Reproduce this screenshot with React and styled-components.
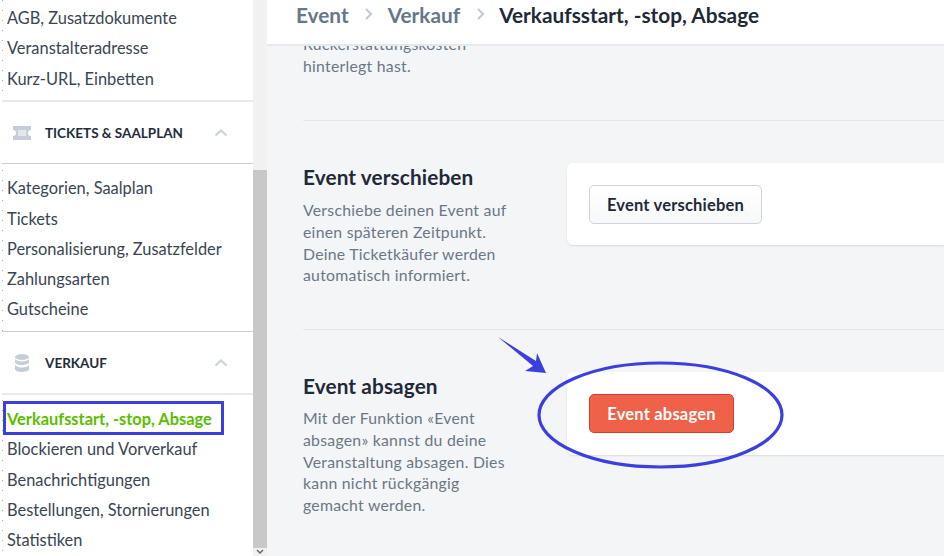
import React from "react";
import styled, { createGlobalStyle } from "styled-components";

const GlobalStyle = createGlobalStyle`
  html, body {
    margin: 0;
    padding: 0;
    height: 100%;
    overflow: hidden;
    background: #f4f5f7;
    font-family: "Lato", "Liberation Sans", sans-serif;
  }
  #root { height: 100%; }
`;

const Page = styled.div`
  position: relative;
  display: flex;
  width: 944px;
  height: 556px;
  overflow: hidden;
  background: #f4f5f7;
`;

const Sidebar = styled.nav`
  width: 253px;
  height: 556px;
  flex: none;
  padding: 3px 0 0 2px;
  box-sizing: border-box;
  overflow: hidden;
  background-color: #fff;
  background-image: repeating-linear-gradient(#a9afb6 0 1px, transparent 1px 10px);
  background-size: 1px 100%;
  background-position: 2px 0;
  background-repeat: no-repeat;
`;

const NavList = styled.div`
  display: flex;
  flex-direction: column;
  padding: ${(p) => p.$top || 0}px 0 6.5px 5px;
`;

const NavItem = styled.a`
  height: 30.25px;
  line-height: 30px;
  font-size: 16.4px;
  color: ${(p) => (p.$active ? "#5bbd00" : "#3a4553")};
  font-weight: ${(p) => (p.$active ? 700 : 400)};
  white-space: nowrap;
`;

const Section = styled.div`
  display: flex;
  align-items: center;
  height: ${(p) => p.$height}px;
  box-sizing: border-box;
  background: #fff;
  border-top: ${(p) => p.$topLine};
  border-bottom: ${(p) => p.$bottomLine};
  padding: 0 25px 0 10px;
`;

const SectionIcon = styled.span`
  display: flex;
  justify-content: center;
  width: 20px;
  margin-right: 13px;
`;

const SectionTitle = styled.span`
  flex: 1;
  font-size: 13.5px;
  font-weight: 700;
  color: #222c3a;
`;

const Scrollbar = styled.div`
  width: 14px;
  flex: none;
  background: #f1f1f1;
  padding-top: 170px;
  box-sizing: border-box;
`;

const Thumb = styled.div`
  height: 378px;
  background: #c8c8c8;
`;

const ScrollArrow = styled.svg`
  display: block;
  margin: 1px auto 0;
`;

const Main = styled.main`
  flex: 1;
  display: flex;
  flex-direction: column;
  min-width: 0;
  overflow: hidden;
`;

const Header = styled.header`
  height: 46px;
  flex: none;
  box-sizing: border-box;
  display: flex;
  align-items: center;
  gap: 12.5px;
  padding: 0 0 16px 29px;
  background: #fff;
  border-bottom: 2px solid #e6e8eb;
  font-size: 20.8px;
  font-weight: 700;
`;

const Crumb = styled.span`
  color: ${(p) => (p.$current ? "#1f2937" : "#66778a")};
  white-space: nowrap;
`;

const Content = styled.div`
  flex: 1;
  overflow: hidden;
  padding-left: 36px;
`;

const Leftover = styled.div`
  margin-top: -13px;
  height: 87px;
  border-bottom: 1px solid #e4e6e9;
`;

const Row = styled.section`
  display: flex;
  align-items: flex-start;
  height: ${(p) => p.$height}px;
  box-sizing: border-box;
  padding-top: 42px;
  border-bottom: ${(p) => (p.$line ? "1px solid #e4e6e9" : "none")};
`;

const Copy = styled.div`
  width: 264px;
  flex: none;
  padding-top: 1px;
`;

const Heading = styled.h3`
  margin: 0 0 ${(p) => p.$gap}px;
  font-size: 20.8px;
  letter-spacing: 0.1px;
  line-height: 26px;
  font-weight: 700;
  color: #1f2937;
`;

const Text = styled.p`
  margin: 0;
  width: 212px;
  font-size: 15.8px;
  letter-spacing: 0.25px;
  line-height: 21.8px;
  color: #6b7785;
`;

const Card = styled.div`
  flex: 1;
  height: ${(p) => p.$height}px;
  box-sizing: border-box;
  padding: 22px;
  background: #fff;
  border-radius: 6px 0 0 6px;
  box-shadow: 0 1px 2px rgba(30, 40, 60, 0.12);
`;

const Button = styled.button`
  display: block;
  height: 39px;
  width: ${(p) => p.$width}px;
  padding: 0;
  border-radius: 5px;
  font-family: inherit;
  font-size: 16.5px;
  letter-spacing: 0.2px;
  font-weight: 700;
  color: ${(p) => (p.$danger ? "#fff" : "#1f2937")};
  background: ${(p) => (p.$danger ? "#ef6249" : "linear-gradient(#fff, #f7f8f9)")};
  border: 1px solid ${(p) => (p.$danger ? "#d43c33" : "#cfd4da")};
`;

const Annotation = styled.svg`
  position: absolute;
  left: 0;
  top: 0;
  pointer-events: none;
`;

const Chevron = ({ color = "#cdd3da", dir = "up", size = 14 }) => (
  <svg width={size} height={size} viewBox="0 0 14 14" fill="none">
    <path
      d={dir === "up" ? "M1.5 9.5 L7 4.5 L12.5 9.5" : "M5 2 L10 7 L5 12"}
      stroke={color}
      strokeWidth="2.2"
    />
  </svg>
);

const TicketIcon = () => (
  <svg width="18" height="14" viewBox="0 0 18 14">
    <path
      fill="#c5ced8"
      fillRule="evenodd"
      d="M0 0h18v4a3 3 0 0 0 0 6v4H0v-4a3 3 0 0 0 0-6zM5 4.500v5h8v-5z"
    />
    <rect x="5" y="4.500" width="8" height="5" fill="#e3e7ec" />
  </svg>
);

const StackIcon = () => (
  <svg width="14" height="18" viewBox="0 0 14 18" fill="#c5ced8">
    <ellipse cx="7" cy="3" rx="7" ry="3" />
    <path d="M0 5v3c0 1.700 3.100 3 7 3s7-1.300 7-3V5c-1 1.600-3.800 2.400-7 2.400S1 6.600 0 5z" />
    <path d="M0 11v4c0 1.700 3.100 3 7 3s7-1.300 7-3v-4c-1 1.600-3.800 2.400-7 2.400S1 12.600 0 11z" />
  </svg>
);

const firstGroup = ["AGB, Zusatzdokumente", "Veranstalteradresse", "Kurz-URL, Einbetten"];
const ticketItems = ["Kategorien, Saalplan", "Tickets", "Personalisierung, Zusatzfelder", "Zahlungsarten", "Gutscheine"];
const salesItems = ["Verkaufsstart, -stop, Absage", "Blockieren und Vorverkauf", "Benachrichtigungen", "Bestellungen, Stornierungen", "Statistiken"];

export default function App() {
  return (
    <Page>
      <GlobalStyle />
      <Sidebar>
        <NavList>
          {firstGroup.map((t) => <NavItem key={t}>{t}</NavItem>)}
        </NavList>
        <Section $height={63.5} $topLine="2px solid #e8eaed" $bottomLine="1px solid #c9ced3">
          <SectionIcon><TicketIcon /></SectionIcon>
          <SectionTitle>TICKETS &amp; SAALPLAN</SectionTitle>
          <Chevron />
        </Section>
        <NavList $top={9.5}>
          {ticketItems.map((t) => <NavItem key={t}>{t}</NavItem>)}
        </NavList>
        <Section $height={64} $topLine="1px solid #c9ced3" $bottomLine="2px solid #e8eaed">
          <SectionIcon><StackIcon /></SectionIcon>
          <SectionTitle>VERKAUF</SectionTitle>
          <Chevron />
        </Section>
        <NavList $top={9}>
          {salesItems.map((t, i) => <NavItem key={t} $active={i === 0}>{t}</NavItem>)}
        </NavList>
      </Sidebar>
      <Scrollbar>
        <Thumb />
        <ScrollArrow width="8" height="6" viewBox="0 0 8 6">
          <path d="M1 1l3 3 3-3" stroke="#666" strokeWidth="1.500" fill="none" />
        </ScrollArrow>
      </Scrollbar>
      <Main>
        <Header>
          <Crumb>Event</Crumb>
          <Chevron dir="right" color="#c3ccd6" />
          <Crumb>Verkauf</Crumb>
          <Chevron dir="right" color="#c3ccd6" />
          <Crumb $current>Verkaufsstart, -stop, Absage</Crumb>
        </Header>
        <Content>
          <Leftover>
            <Text>Rückerstattungskosten<br />hinterlegt hast.</Text>
          </Leftover>
          <Row $height={209} $line>
            <Copy>
              <Heading $gap={9}>Event verschieben</Heading>
              <Text>Verschiebe deinen Event auf einen späteren Zeitpunkt. Deine Ticketkäufer werden automatisch informiert.</Text>
            </Copy>
            <Card $height={82}><Button $width={173}>Event verschieben</Button></Card>
          </Row>
          <Row $height={226}>
            <Copy>
              <Heading $gap={8}>Event absagen</Heading>
              <Text>Mit der Funktion «Event absagen» kannst du deine Veranstaltung absagen. Dies kann nicht rückgängig gemacht werden.</Text>
            </Copy>
            <Card $height={83}><Button $width={145} $danger>Event absagen</Button></Card>
          </Row>
        </Content>
      </Main>
      <Annotation width="944" height="556" viewBox="0 0 944 556" fill="none">
        <rect x="4.500" y="402.500" width="218" height="31" stroke="#3b3fe0" strokeWidth="3" />
        <ellipse cx="660.500" cy="415" rx="121.500" ry="52" stroke="#3b3fe0" strokeWidth="3.200" />
        <path d="M498 337 L536 361 L537 353 L546 373 L525 371 L533 366 Z" fill="#3b3fe0" />
      </Annotation>
    </Page>
  );
}
